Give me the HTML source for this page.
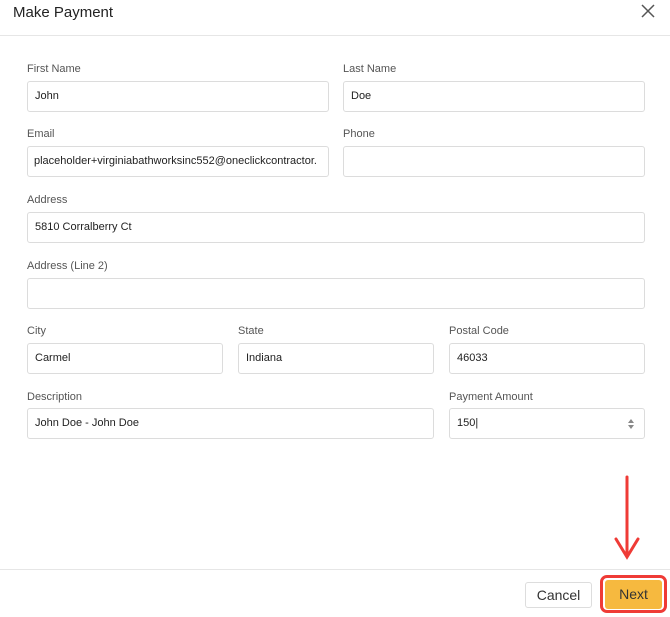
<!DOCTYPE html>
<html><head><style>
body{margin:0;width:670px;height:617px;background:#fff;font-family:"Liberation Sans",sans-serif;position:relative;overflow:hidden;color:#333}
.t{position:absolute;left:13px;top:4px;font-size:15px;color:#222}
.hl{position:absolute;left:0;top:35px;width:670px;height:1px;background:#e6e6e6}
.fl{position:absolute;left:0;top:569px;width:670px;height:1px;background:#e6e6e6}
.l{position:absolute;font-size:11px;color:#555}
.i{position:absolute;box-sizing:border-box;border:1px solid #dcdcdc;border-radius:3px;height:31px;font-size:11px;color:#222;padding-left:7px;line-height:29px;white-space:nowrap;overflow:hidden}
</style></head><body>
<div class="t">Make Payment</div>
<svg style="position:absolute;left:641px;top:4px" width="14" height="14"><path d="M1 1L13 13M13 1L1 13" stroke="#555" stroke-width="1.5"/></svg>
<div class="hl"></div>
<div class="l" style="left:27px;top:63px">First Name</div>
<div class="l" style="left:343px;top:63px">Last Name</div>
<div class="i" style="left:27px;top:81px;width:302px">John</div>
<div class="i" style="left:343px;top:81px;width:302px">Doe</div>
<div class="l" style="left:27px;top:128px">Email</div>
<div class="l" style="left:343px;top:128px">Phone</div>
<div class="i" style="left:27px;top:146px;width:302px;padding-left:6px">placeholder+virginiabathworksinc552@oneclickcontractor.</div>
<div class="i" style="left:343px;top:146px;width:302px"></div>
<div class="l" style="left:27px;top:194px">Address</div>
<div class="i" style="left:27px;top:212px;width:618px">5810 Corralberry Ct</div>
<div class="l" style="left:27px;top:260px">Address (Line 2)</div>
<div class="i" style="left:27px;top:278px;width:618px"></div>
<div class="l" style="left:27px;top:325px">City</div>
<div class="l" style="left:238px;top:325px">State</div>
<div class="l" style="left:449px;top:325px">Postal Code</div>
<div class="i" style="left:27px;top:343px;width:196px">Carmel</div>
<div class="i" style="left:238px;top:343px;width:196px">Indiana</div>
<div class="i" style="left:449px;top:343px;width:196px">46033</div>
<div class="l" style="left:27px;top:391px">Description</div>
<div class="l" style="left:449px;top:391px">Payment Amount</div>
<div class="i" style="left:27px;top:408px;width:407px">John Doe - John Doe</div>
<div class="i" style="left:449px;top:408px;width:196px">150|</div>
<svg style="position:absolute;left:627px;top:418px" width="8" height="12"><path d="M1 5L4 1L7 5ZM1 7L4 11L7 7Z" fill="#888"/></svg>
<svg style="position:absolute;left:612px;top:474px" width="30" height="88"><path d="M15 3V82M4 65L15 83L26 65" stroke="#ef3b36" stroke-width="3" fill="none" stroke-linecap="round"/></svg>
<div class="fl"></div>
<div style="position:absolute;left:525px;top:582px;width:67px;height:26px;box-sizing:border-box;border:1px solid #ddd;border-radius:3px;font-size:14px;text-align:center;line-height:24px;color:#333">Cancel</div>
<div style="position:absolute;left:600px;top:575px;width:67px;height:38px;box-sizing:border-box;border:3px solid #ef3b36;border-radius:7px"></div>
<div style="position:absolute;left:605px;top:580px;width:57px;height:29px;background:#f6b93f;border-radius:3px;font-size:14px;text-align:center;line-height:29px;color:#333">Next</div>
</body></html>
